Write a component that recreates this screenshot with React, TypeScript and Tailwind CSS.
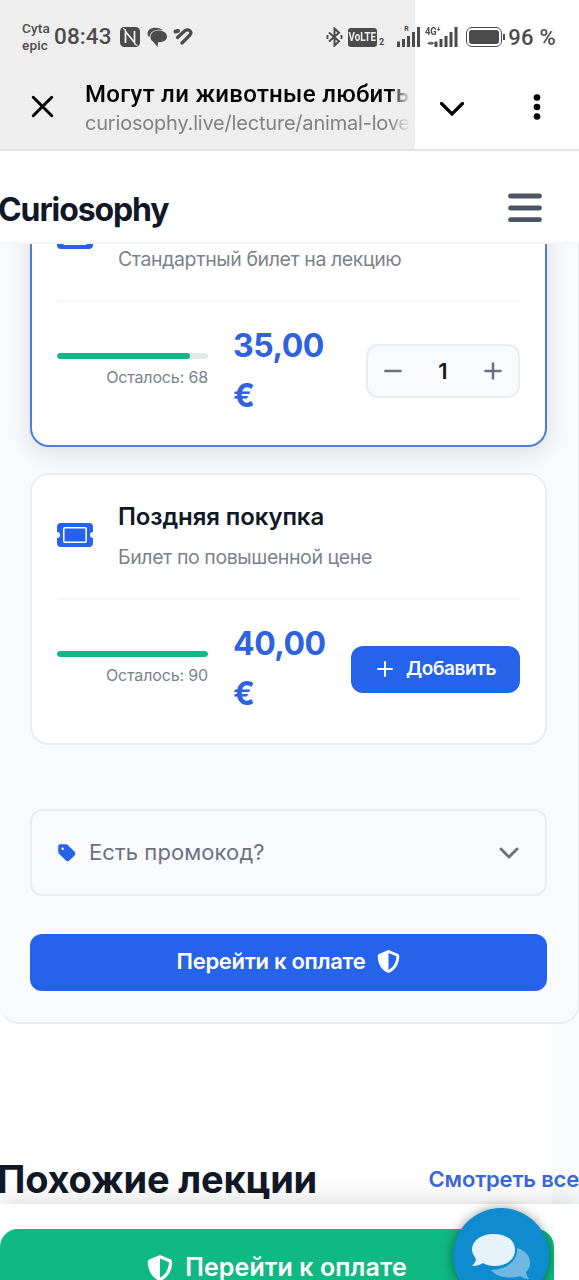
import { useState } from "react";
import { ChevronDown, Minus, Plus, X } from "lucide-react";
import { FaShieldHalved, FaTag } from "react-icons/fa6";

interface Ticket {
  id: string;
  name?: string;
  description: string;
  price: string;
  left: number;
  percent: number;
}

const tickets: Ticket[] = [
  {
    id: "standard",
    description: "Стандартный билет на лекцию",
    price: "35,00",
    left: 68,
    percent: 88,
  },
  {
    id: "late",
    name: "Поздняя покупка",
    description: "Билет по повышенной цене",
    price: "40,00",
    left: 90,
    percent: 100,
  },
];

const SignalBars = ({ className }: { className: string }) => (
  <svg viewBox="0 0 24 20" className={className} fill="currentColor">
    <rect x="0" y="14.5" width="3" height="5.5" />
    <rect x="5" y="12" width="3" height="8" />
    <rect x="10" y="9" width="3" height="11" />
    <rect x="15" y="5" width="3" height="15" />
    <rect x="20" y="0" width="3" height="20" />
  </svg>
);

const TicketIcon = () => (
  <svg viewBox="0 0 36 24" className="mt-[-4px] h-6 w-9 shrink-0">
    <path
      d="M4 0H32A4 4 0 0 1 36 4V9A3 3 0 0 0 36 15V20A4 4 0 0 1 32 24H4A4 4 0 0 1 0 20V15A3 3 0 0 0 0 9V4A4 4 0 0 1 4 0Z"
      fill="#2563eb"
    />
    <rect x="6.800" y="4.800" width="22.400" height="14.400" rx="1" fill="none" stroke="white" strokeWidth="1.500" />
  </svg>
);

const StatusBar = () => (
  <div className="flex h-[72px] items-center pt-[2px] pl-[22px] font-[Roboto,sans-serif] text-[#4b4b4b]">
    <div className="w-[31px] shrink-0 text-[13.500px] leading-[17px] font-medium tracking-[0.2px]">
      <div>Cyta</div>
      <div>epic</div>
    </div>
    <div className="w-[65px] shrink-0 pl-px text-[22.500px] font-medium tracking-[0.1px] whitespace-nowrap">08:43</div>
    <svg viewBox="0 0 20 20" className="ml-[2px] h-5 w-5 shrink-0">
      <rect width="20" height="20" rx="4.5" fill="#4b4b4b" />
      <path d="M5.500 16V4.500L14.500 15.500V4" fill="none" stroke="#eee" strokeWidth="1.800" />
      <path d="M3 1.500L6 3M14.500 17L17.500 18.500" fill="none" stroke="#eee" strokeWidth="1.200" />
    </svg>
    <svg viewBox="0 0 20 20" className="ml-[7px] h-5 w-5 shrink-0">
      <path d="M1 9C-1 3 5 0 10 1C13 1 15 2 16 3C9 2 3 4 2.500 10Z" fill="#4b4b4b" />
      <path d="M11.500 3.500C16.500 3.500 20 6 20 9.500C20 13 17 15.200 11 15.300L10.500 20L6.500 15C4.500 14 3.500 12 3.500 10C3.500 6 7 3.500 11.500 3.500Z" fill="#4b4b4b" />
    </svg>
    <svg viewBox="0 0 20 18" className="ml-[6px] h-[18px] w-5 shrink-0" fill="none" stroke="#4b4b4b" strokeLinecap="round" strokeWidth="3.200">
      <path d="M2.500 3.500L5 3" strokeWidth="4" />
      <path d="M4.500 9.500L11 3.500C13 1.500 16 1.500 17.200 3C18.500 4.500 18 6 16.500 7.500L9 15" />
    </svg>
    <svg viewBox="0 0 17 20" className="ml-[133px] h-5 w-[17px] shrink-0" fill="none" stroke="#4b4b4b" strokeWidth="2">
      <path d="M3 5.500L13 14.200L8.500 18.500V1.500L13 5.800L3 14.500" />
      <path d="M1.500 8V12M15.500 8V12" strokeWidth="1.800" />
    </svg>
    <div className="ml-[5px] flex h-[19px] w-[29px] shrink-0 items-center justify-center rounded-[3px] bg-[#4b4b4b]">
      <span className="scale-x-75 text-[13px] font-bold text-[#eee]">VoLTE</span>
    </div>
    <span className="mt-[11px] ml-[2px] text-[9px] leading-none font-bold">2</span>
    <div className="relative ml-[13px] shrink-0">
      <SignalBars className="h-5 w-[24px]" />
      <span className="absolute top-[-1px] left-[7px] text-[7px] leading-none font-bold">R</span>
    </div>
    <div className="relative ml-[13px] h-5 w-[25px] shrink-0">
      <SignalBars className="h-5 w-[25px]" />
      <span className="absolute top-0 -left-[9px] origin-left scale-x-85 bg-white text-[11px] leading-[10px] font-bold">4G⁺</span>
      <span className="absolute top-[13px] -left-[7px] text-[7px] leading-none">◂▸</span>
    </div>
    <div className="ml-[7px] h-[20px] w-[36px] shrink-0 rounded-[6px] border border-[#4b4b4b] p-[2px]">
      <div className="h-full rounded-[3px] bg-[#4b4b4b]" />
    </div>
    <div className="ml-px h-[6px] w-[2px] shrink-0 bg-[#4b4b4b]" />
    <span className="ml-[3px] text-[22px] font-medium tracking-[0.3px] whitespace-nowrap">96 %</span>
  </div>
);

const BrowserBar = () => (
  <div className="flex h-[78px] items-center">
    <X className="mt-[-9px] ml-[24px] h-[37px] w-[37px] shrink-0 text-black" strokeWidth={1.9} />
    <div className="mt-[-5px] ml-[24px] w-[325px] shrink-0 overflow-hidden mask-r-from-94% whitespace-nowrap">
      <div className="font-[Roboto,sans-serif] text-[24px] leading-[30px] font-medium tracking-[0.3px] text-black">
        Могут ли животные любить
      </div>
      <div className="font-[Inter,sans-serif] text-[20px] leading-[29px] tracking-[-0.2px] text-[#828282]">
        curiosophy.live/lecture/animal-love
      </div>
    </div>
    <svg viewBox="0 0 24 14" className="mt-[-5px] ml-[30px] h-[14px] w-6" fill="none" stroke="black" strokeWidth="3.200">
      <path d="M1.500 1.500L12 12L22.500 1.500" strokeLinecap="round" />
    </svg>
    <svg viewBox="0 0 8 26" className="mt-[-9px] ml-[69px] h-[26px] w-2">
      <circle cx="4" cy="3.500" r="3.300" />
      <circle cx="4" cy="13" r="3.300" />
      <circle cx="4" cy="22.500" r="3.300" />
    </svg>
  </div>
);

const TicketCard = ({ ticket, selected }: { ticket: Ticket; selected: boolean }) => {
  const [count, setCount] = useState(1);

  return (
    <div
      className={`h-[272px] shrink-0 rounded-[19px] border-2 bg-white px-[25px] ${
        selected ? "border-[#4f7ddc] shadow-[0_6px_24px_rgba(0,0,0,0.12)]" : "border-[#eaecef]"
      }`}
    >
      <div className="flex h-[125px] items-center border-b-2 border-[#f6f7f9]">
        <TicketIcon />
        <div className="ml-[25px] whitespace-nowrap">
          <h3 className="h-10 text-[24px] leading-[40px] font-semibold tracking-[-0.1px] text-[#111827]">{ticket.name}</h3>
          <p className="text-[19.500px] leading-[40px] tracking-[-0.4px] text-[#7b828e]">{ticket.description}</p>
        </div>
      </div>
      <div className="flex h-[138px] items-center">
        <div className="w-[151px] shrink-0">
          <div className="h-[6px] overflow-hidden rounded-full bg-[#e5e7eb]">
            <div className="h-full rounded-full bg-[#10b981]" style={{ width: `${ticket.percent}%` }} />
          </div>
          <p className="mt-[6px] text-right text-[16px] leading-[24px] tracking-[-0.15px] text-[#7b828e]">
            Осталось: {ticket.left}
          </p>
        </div>
        <div className="ml-[25px] flex-1 text-[32px] leading-[50px] font-bold tracking-[-0.5px] text-[#2d62e0]">
          <div>{ticket.price}</div>
          <div>€</div>
        </div>
        {selected ? (
          <div className="flex h-[54px] w-[154px] items-center justify-between rounded-[12px] border-2 border-[#eaecef] bg-[#f9fafb] px-[12px] text-[#6b7280]">
            <button onClick={() => setCount(Math.max(0, count - 1))}>
              <Minus className="h-[26px] w-[26px]" strokeWidth={2.3} />
            </button>
            <span className="text-[22px] font-semibold text-[#111827]">{count}</span>
            <button onClick={() => setCount(count + 1)}>
              <Plus className="h-[26px] w-[26px]" strokeWidth={2.3} />
            </button>
          </div>
        ) : (
          <button className="flex h-[47px] w-[169px] items-center rounded-[12px] bg-[#2563eb] pl-[22px] text-[19px] font-semibold tracking-[-0.4px] text-white">
            <Plus className="mr-[9px] h-[24px] w-[24px] shrink-0" strokeWidth={2} />
            Добавить
          </button>
        )}
      </div>
    </div>
  );
};

const ChatButton = () => (
  <button className="absolute top-[4px] left-[453px] h-[96px] w-[96px] rounded-full bg-[#0f8bd0] shadow-[0_1px_12px_rgba(0,0,0,0.45)]">
    <svg viewBox="0 0 96 96" className="h-full w-full">
      <path
        d="M64 40C72 42 77 48 77 55C77 59 75.500 61 73 64C73 67 75 69 76 71C72 71 69 69 67 68C57 71 44 70 38 62C53 61 65 54 64 40Z"
        fill="#70b8e3"
      />
      <path
        d="M41 26C53 26 62 32 62 42C62 52 53 58 41 58C37 58 33 57 30 55C27 57 23 58 19 58C21 56 23 53 23 51C21 48 19 45 19 42C19 32 29 26 41 26Z"
        fill="#e6f3fb"
      />
    </svg>
  </button>
);

const App = () => {
  return (
    <div className="flex h-[1280px] w-[579px] flex-col overflow-hidden bg-white font-[Inter,sans-serif]">
      <header className="h-[151px] shrink-0 border-b-2 border-[#e2e2e2] bg-[linear-gradient(90deg,#eeeeee_415px,#ffffff_415px)]">
        <StatusBar />
        <BrowserBar />
      </header>

      <nav className="flex h-[93px] shrink-0 items-center justify-between border-b-2 border-[#f4f5f7] bg-white pt-[27px] pr-[37px]">
        <span className="-ml-[2px] text-[32px] font-bold tracking-[-1.1px] text-[#111827]">Curiosophy</span>
        <svg viewBox="0 0 34 30" className="mb-[4px] h-[30px] w-[34px]" stroke="#4b5563" strokeLinecap="round" strokeWidth="4.800">
          <path d="M2.500 3H31.500M2.500 15H31.500M2.500 26.700H31.500" />
        </svg>
      </nav>

      <main className="flex min-h-0 flex-1 flex-col bg-[linear-gradient(90deg,#ffffff_552px,#f8fafc_552px)]">
        <section className="flex h-[780px] shrink-0 flex-col rounded-b-[19px] border-r border-b-2 border-[#e8eaee] bg-[#f8fafc] pr-[31px] pl-[30px]">
          {/* the first card is scrolled under the site header */}
          <div className="flex h-[229px] shrink-0 flex-col justify-end pb-[26px] [clip-path:inset(0_-29px_-30px_-29px)]">
            <TicketCard ticket={tickets[0]} selected />
          </div>
          <div className="relative flex shrink-0 flex-col">
            <TicketCard ticket={tickets[1]} selected={false} />
          </div>
          <button className="mt-[64px] flex h-[87px] shrink-0 items-center rounded-[12px] border-2 border-[#eaecef] px-[25px] text-[22px] tracking-[0.1px] text-[#6b7280]">
            <FaTag className="mr-[12px] h-5 w-5 text-[#2563eb]" />
            Есть промокод?
            <ChevronDown className="mr-[-5px] ml-auto h-[32px] w-[32px]" strokeWidth={2.200} />
          </button>
          <button className="mt-[38px] flex h-[57px] shrink-0 items-center justify-center rounded-[12px] bg-[#2563eb] pb-[2px] text-[22px] font-semibold tracking-[-0.300px] text-white">
            Перейти к оплате
            <FaShieldHalved className="ml-[12px] h-[23px] w-[23px]" />
          </button>
        </section>

        <div className="mt-auto flex h-[50px] shrink-0 items-center justify-between whitespace-nowrap">
          <h2 className="-ml-[3px] text-[38px] font-bold tracking-[-0.200px] text-[#111827]">Похожие лекции</h2>
          <a className="text-[22px] font-semibold tracking-[-0.200px] text-[#3b66d9]">Смотреть все</a>
        </div>
      </main>

      <footer className="relative h-[76px] shrink-0 bg-white pt-[25px] shadow-[0_-4px_20px_rgba(0,0,0,0.14)]">
        <button className="flex h-[78px] w-[554px] items-center justify-center rounded-[18px] bg-[#10b981] text-[25px] font-semibold tracking-[0.100px] text-white">
          <FaShieldHalved className="mr-[12px] h-[26px] w-[26px]" />
          Перейти к оплате
        </button>
        <ChatButton />
      </footer>
    </div>
  );
};

export default App;
